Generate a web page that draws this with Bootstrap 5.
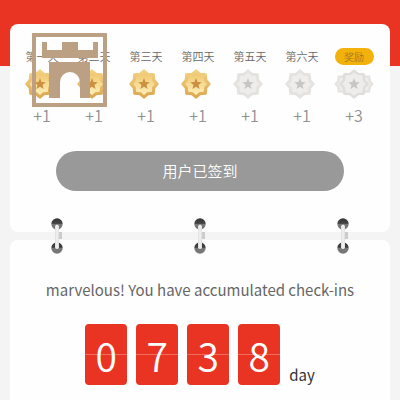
<!DOCTYPE html>
<html lang="zh-CN">
<head>
<meta charset="utf-8">
<meta name="viewport" content="width=device-width, initial-scale=1">
<title>签到</title>
<link href="https://cdn.jsdelivr.net/npm/bootstrap@5.3.0/dist/css/bootstrap.min.css" rel="stylesheet">
<style>
body{font-family:"Noto Sans CJK SC",sans-serif;font-weight:350;background:linear-gradient(#e93323 66px,#f4f4f4 66px) no-repeat #f4f4f4;min-height:100vh;overflow-x:hidden}
.page{padding:24px 10px 0;min-height:100vh}
.panel{background:#fefefe;border-radius:8px}
.signin{padding:24px 10px 41px 6px}
.day-item{flex:1 1 0;min-width:0}
.day-name{font-size:11px;line-height:17px;color:#666;white-space:nowrap}
.bonus{width:39px;background:#f2b10b;color:#a07a20;font-size:10px}
.medal{display:block;width:40px;height:32px;margin-top:3px}
.medal-single{margin-right:5px}
.points{font-size:16px;line-height:20px;color:#909090;margin-top:5px}
.sign-wrap{padding:26px 36px 0 40px}
.sign-btn{height:40px;background:#999!important;color:#fff!important;font-size:15px;font-weight:350;line-height:20px;border:0;padding:0;opacity:1!important}
.logo{left:32px;top:33px;width:75px;height:74px}
.link-row{height:8px;padding:0 38px}
.link-ring{width:18px;height:38px;margin-top:-15px;position:relative;z-index:2}
.total{border-radius:8px 8px 0 0;padding-top:38px}
.message{font-size:15px;font-weight:400;line-height:24px;color:#666}
.counter{gap:9px;margin-top:22px}
.digit{width:42px;height:61px;border-radius:4px;background:linear-gradient(transparent 30px,#f16d60 30px,#f16d60 31px,transparent 31px) #e93323;color:#fff;font-size:39px;line-height:62px}
.unit{font-size:15px;font-weight:400;line-height:20px;color:#333}
</style>
<script src="https://cdn.jsdelivr.net/npm/bootstrap@5.3.0/dist/js/bootstrap.bundle.min.js"></script>
</head>
<body>
<svg width="0" height="0" class="position-absolute" aria-hidden="true">
<defs>
<linearGradient id="goldEdge" x1="0" y1="0" x2="0" y2="1"><stop offset="0" stop-color="#f3d283"/><stop offset="1" stop-color="#dca651"/></linearGradient>
<linearGradient id="goldFill" x1="0" y1="0" x2="0" y2="1"><stop offset="0" stop-color="#f0c66e"/><stop offset="1" stop-color="#fdf0b8"/></linearGradient>
<linearGradient id="ringFill"><stop offset="0" stop-color="#ddd"/><stop offset=".5" stop-color="#f3f3f3"/><stop offset="1" stop-color="#ddd"/></linearGradient>
<linearGradient id="holeFill" x1="0" y1="0" x2="0" y2="1"><stop offset="0" stop-color="#333"/><stop offset=".45" stop-color="#444"/><stop offset=".5" stop-color="#777"/><stop offset="1" stop-color="#777"/></linearGradient>
<path id="burst" d="M0-14 4-10.6 10-10 10.6-4 14 0 10.6 4 10 10 4 10.6 0 14-4 10.6-10 10-10.6 4-14 0-10.6-4-10-10-4-10.6Z" stroke-width="1.5" stroke-linejoin="round"/>
<path id="star" d="M0-6 1.6-2 5.7-1.8 2.5.9 3.6 5 0 2.7-3.6 5-2.5.9-5.7-1.8-1.6-2Z"/>
<symbol id="gold" viewBox="-20 -16 40 32"><use href="#burst" fill="url(#goldEdge)" stroke="url(#goldEdge)"/><use href="#burst" fill="url(#goldFill)" transform="scale(.78)"/><use href="#star" fill="#cb9040"/></symbol>
<symbol id="gray" viewBox="-20 -16 40 32"><use href="#burst" fill="#e5e3e0" stroke="#e5e3e0"/><use href="#burst" fill="#efedeb" transform="scale(.78)"/><use href="#star" fill="#c8c6c4"/></symbol>
<symbol id="triple" viewBox="-20 -16 40 32"><g transform="translate(-8) scale(.78)"><use href="#burst" fill="#e5e3e0" stroke="#e5e3e0"/><use href="#burst" fill="#efedeb" transform="scale(.78)"/></g><g transform="translate(8) scale(.78)"><use href="#burst" fill="#e5e3e0" stroke="#e5e3e0"/><use href="#burst" fill="#efedeb" transform="scale(.78)"/></g><use href="#burst" fill="#e0dedc" stroke="#e0dedc"/><use href="#burst" fill="#efedeb" transform="scale(.84)"/><use href="#star" fill="#c8c6c4"/></symbol>
<symbol id="ring" viewBox="0 0 18 38"><circle cx="9" cy="7" r="5.7" fill="url(#holeFill)"/><circle cx="9" cy="31" r="5.7" fill="url(#holeFill)"/><path d="M11 15h3v7h-3z" fill="#ccc"/><path d="M7 9q2-3 4 0v22q-2 2-4 0Z" fill="url(#ringFill)"/></symbol>
</defs>
</svg>
<main class="page d-flex flex-column">
<section class="panel signin">
<div class="d-flex text-center">
<div class="day-item d-flex flex-column align-items-center"><span class="day-name">第一天</span><svg class="medal medal-single"><use href="#gold"/></svg><span class="points">+1</span></div>
<div class="day-item d-flex flex-column align-items-center"><span class="day-name">第二天</span><svg class="medal medal-single"><use href="#gold"/></svg><span class="points">+1</span></div>
<div class="day-item d-flex flex-column align-items-center"><span class="day-name">第三天</span><svg class="medal medal-single"><use href="#gold"/></svg><span class="points">+1</span></div>
<div class="day-item d-flex flex-column align-items-center"><span class="day-name">第四天</span><svg class="medal medal-single"><use href="#gold"/></svg><span class="points">+1</span></div>
<div class="day-item d-flex flex-column align-items-center"><span class="day-name">第五天</span><svg class="medal medal-single"><use href="#gray"/></svg><span class="points">+1</span></div>
<div class="day-item d-flex flex-column align-items-center"><span class="day-name">第六天</span><svg class="medal medal-single"><use href="#gray"/></svg><span class="points">+1</span></div>
<div class="day-item d-flex flex-column align-items-center"><span class="day-name bonus rounded-pill">奖励</span><svg class="medal"><use href="#triple"/></svg><span class="points">+3</span></div>
</div>
<div class="sign-wrap"><button type="button" class="btn sign-btn d-block w-100 rounded-pill" disabled>用户已签到</button></div>
</section>
<div class="link-row d-flex justify-content-between" aria-hidden="true">
<svg class="link-ring"><use href="#ring"/></svg><svg class="link-ring"><use href="#ring"/></svg><svg class="link-ring"><use href="#ring"/></svg>
</div>
<section class="panel total flex-grow-1">
<p class="message text-center mb-0">marvelous! You have accumulated check-ins</p>
<div class="counter d-flex justify-content-center align-items-end text-center">
<span class="digit">0</span><span class="digit">7</span><span class="digit">3</span><span class="digit">8</span><span class="unit">day</span>
</div>
</section>
</main>
<svg class="logo position-absolute" viewBox="0 0 75 74" role="img" aria-label="城堡"><path d="M2 2h71v70H2Z" fill="none" stroke="#bca083" stroke-width="4"/><path d="M10 9h5v8h15V9h16v8h15V9h5v16H10ZM17 29h41v36H48V49a10 10 0 0 0-20 0v16H17Z" fill="#bca083"/></svg>
</body>
</html>
